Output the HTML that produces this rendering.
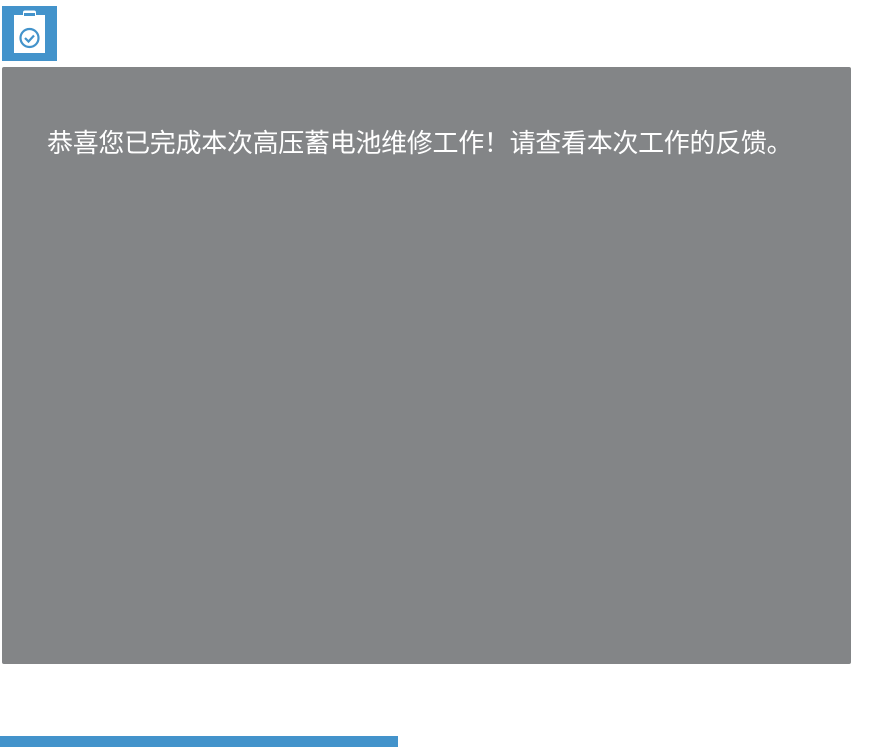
<!DOCTYPE html>
<html><head><meta charset="utf-8"><style>
body{margin:0;width:875px;height:754px;background:#fff;position:relative;overflow:hidden;font-family:"Liberation Sans","Noto Sans CJK SC",sans-serif}
.ic{position:absolute;left:2px;top:6px;width:55px;height:55px;background:#4393cb}
.box{position:absolute;left:2px;top:67px;width:849px;height:597px;background:#838587;border-radius:2px}
.t{position:absolute;left:47px;top:126px;color:#fff;font-size:26px;line-height:34px;letter-spacing:-0.3px;white-space:nowrap}
.bar{position:absolute;left:0;top:736px;width:398px;height:11px;background:#4393cb}
</style></head><body>
<div class="ic"><svg width="55" height="55" viewBox="0 0 55 55">
<path d="M12 9h9v-2.5a2 2 0 0 1 2-2h9a2 2 0 0 1 2 2V9h9v38H12z" fill="#fff"/>
<rect x="22" y="7" width="11" height="3" fill="#4393cb"/>
<circle cx="27.5" cy="32" r="9" fill="none" stroke="#4393cb" stroke-width="2.2"/>
<path d="M23 32l3.5 3.5 5.5-6" fill="none" stroke="#4393cb" stroke-width="2.2"/>
</svg></div>
<div class="box"></div>
<div class="t">恭喜您已完成本次高压蓄电池维修工作！请查看本次工作的反馈。</div>
<div class="bar"></div>
</body></html>
